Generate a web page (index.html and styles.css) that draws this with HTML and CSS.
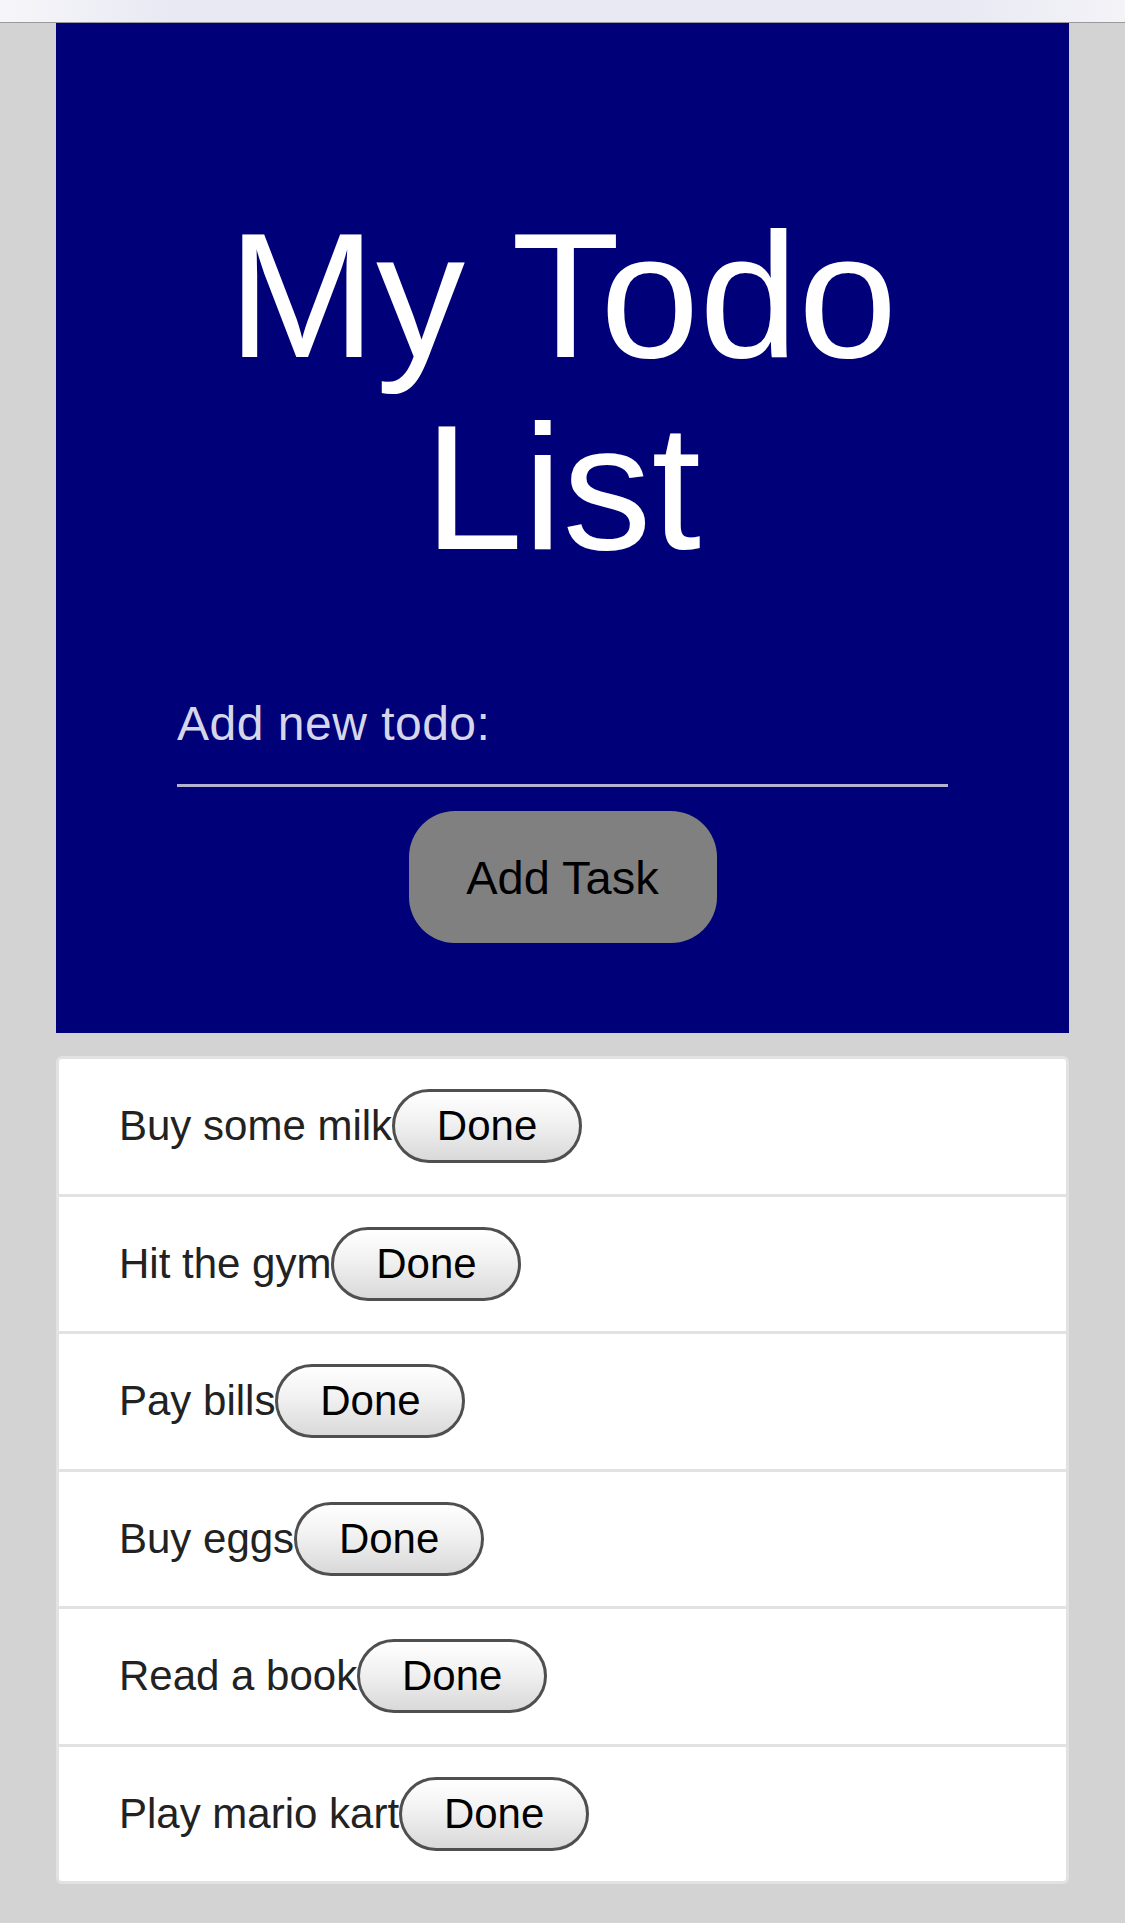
FILE: index.html
```html
<!DOCTYPE html>
<html lang="en">
<head>
<meta charset="utf-8">
<title>My Todo List</title>
<link rel="stylesheet" href="styles.css">
</head>
<body>
<div class="topbar"></div>
<main class="page">
  <header class="hero">
    <h1 class="title">My Todo<br>List</h1>
    <input class="new-todo" type="text" placeholder="Add new todo:">
    <button class="add-btn" type="button">Add Task</button>
  </header>
  <ul class="todo-list">
    <li class="todo"><span class="todo-label">Buy some milk</span><button class="done-btn" type="button">Done</button></li>
    <li class="todo"><span class="todo-label">Hit the gym</span><button class="done-btn" type="button">Done</button></li>
    <li class="todo"><span class="todo-label">Pay bills</span><button class="done-btn" type="button">Done</button></li>
    <li class="todo"><span class="todo-label">Buy eggs</span><button class="done-btn" type="button">Done</button></li>
    <li class="todo"><span class="todo-label">Read a book</span><button class="done-btn" type="button">Done</button></li>
    <li class="todo"><span class="todo-label">Play mario kart</span><button class="done-btn" type="button">Done</button></li>
  </ul>
</main>
</body>
</html>
```
FILE: styles.css
```css
* { box-sizing: border-box; }

html, body {
  margin: 0;
  padding: 0;
  background: #d3d3d3;
  font-family: "Liberation Sans", Arial, Helvetica, sans-serif;
}

.topbar {
  height: 23px;
  background: linear-gradient(90deg, #f6f6fa 0%, #e9e9f3 15%, #e9e9f3 85%, #f3f3f8 100%);
  border-bottom: 1px solid #9a9a9a;
}

.page {
  padding: 0 56px 40px;
  display: flex;
  flex-direction: column;
  gap: 23px;
}

.hero {
  background: #000078;
  display: flex;
  flex-direction: column;
  align-items: center;
  padding: 177px 0 90px;
}

.title {
  margin: 0;
  color: #ffffff;
  font-weight: normal;
  font-size: 178px;
  line-height: 192px;
  text-align: center;
}

.new-todo {
  display: block;
  width: 771px;
  height: 91px;
  margin-top: 112px;
  padding: 0 0 33px 0;
  border: none;
  border-bottom: 3px solid #b3b3d1;
  background: transparent;
  color: #ffffff;
  font-family: "Liberation Sans", Arial, sans-serif;
  font-size: 48px;
  letter-spacing: 0.5px;
  line-height: 55px;
  outline: none;
}

.new-todo::placeholder {
  color: #d6d6ea;
  opacity: 1;
}

.add-btn {
  margin-top: 24px;
  width: 308px;
  height: 132px;
  border: none;
  border-radius: 46px;
  background: #808080;
  color: #000000;
  font-family: "Liberation Sans", Arial, sans-serif;
  font-size: 47px;
  padding: 0;
}

.todo-list {
  list-style: none;
  margin: 0;
  padding: 0;
  background: #ffffff;
  border: 3px solid #e2e2e2;
  border-radius: 6px;
}

.todo {
  display: flex;
  align-items: center;
  height: 137.5px;
  padding-left: 60px;
  border-top: 3px solid #e2e2e2;
}

.todo:first-child {
  height: 134.5px;
  border-top: none;
}

.todo-label {
  font-size: 42px;
  line-height: 48px;
  color: #222222;
}

.done-btn {
  width: 190px;
  height: 74px;
  padding: 0;
  border: 3px solid #4f4f4f;
  border-radius: 37px;
  background: linear-gradient(180deg, #ffffff 0%, #f1f1f1 45%, #d9d9d9 100%);
  color: #000000;
  font-family: "Liberation Sans", Arial, sans-serif;
  font-size: 42px;
  line-height: 48px;
  text-align: center;
}
```
